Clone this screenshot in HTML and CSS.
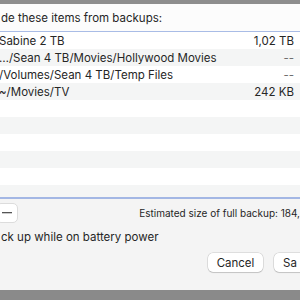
FILE: index.html
```html
<!DOCTYPE html>
<html lang="en">
<head>
    <meta charset="UTF-8">
    <meta name="viewport" content="width=device-width, initial-scale=1.0">
    <title>Time Machine Options</title>
    <link rel="stylesheet" href="styles.css">
</head>
<body>
    <main class="sheet">
        <div class="edge"></div>
        <div class="list-head">de these items from backups:</div>
        <section class="list">
            <div class="row">
                <span class="name">Sabine 2 TB</span>
                <span class="size">1,02 TB</span>
            </div>
            <div class="row">
                <span class="name">…/Sean 4 TB/Movies/Hollywood Movies</span>
                <span class="size muted">--</span>
            </div>
            <div class="row">
                <span class="name">/Volumes/Sean 4 TB/Temp Files</span>
                <span class="size muted">--</span>
            </div>
            <div class="row">
                <span class="name">~/Movies/TV</span>
                <span class="size">242 KB</span>
            </div>
            <div class="row"></div>
            <div class="row"></div>
            <div class="row"></div>
            <div class="row"></div>
            <div class="row"></div>
            <div class="row"></div>
        </section>
        <div class="list-tools">
            <button class="seg-btn">
                <svg width="10" height="2" viewBox="0 0 10 2"><rect width="10" height="1.3" fill="#555"/></svg>
            </button>
            <span class="estimate">Estimated size of full backup: 184,</span>
        </div>
        <div class="check-row">ck up while on battery power</div>
        <div class="actions">
            <button class="btn">Cancel</button>
            <button class="btn btn--cut">Sa</button>
        </div>
        <div class="edge edge--bottom"></div>
    </main>
</body>
</html>
```

FILE: styles.css
```css
* {
    box-sizing: border-box;
    font-family: Inter, "Liberation Sans", sans-serif;
}
body {
    margin: 0;
    width: 300px;
    height: 300px;
    overflow: hidden;
    background: #f4f4f4;
    color: #262626;
}
.sheet {
    display: flex;
    flex-direction: column;
    width: 300px;
    height: 300px;
}
.edge {
    height: 4px;
    background: #8e8e8e;
    flex-shrink: 0;
}
.edge--bottom {
    height: 10px;
    margin-top: auto;
    background: #8a8a8a;
}
.list-head {
    height: 27px;
    padding-left: 1px;
    display: flex;
    align-items: center;
    font-size: 11.5px;
    background: #fcfcfc;
    white-space: nowrap;
}
.list {
    height: 168px;
    overflow: hidden;
    border-top: 1px solid #a9bce6;
    border-bottom: 2px solid #a3b7e4;
    background: #fff;
    flex-shrink: 0;
}
.row {
    display: flex;
    justify-content: space-between;
    align-items: center;
    height: 17px;
    padding: 1px 6px 0 0;
    font-size: 11.5px;
    white-space: nowrap;
}
.row:nth-child(even) {
    background: #f4f5f5;
}
.name {
    margin-left: -1px;
}
.muted {
    color: #6e6e6e;
}
.list-tools {
    display: flex;
    align-items: center;
    height: 20px;
    margin-top: 4px;
}
.seg-btn {
    display: flex;
    align-items: center;
    justify-content: center;
    width: 30px;
    height: 20px;
    margin-left: -4px;
    padding: 0;
    background: #fff;
    border: 1px solid #dcdcdc;
    border-radius: 5px;
}
.estimate {
    margin-left: 121px;
    font-size: 10px;
    white-space: nowrap;
}
.check-row {
    margin-top: 7px;
    height: 14px;
    padding-left: 1px;
    font-size: 11.5px;
    white-space: nowrap;
}
.actions {
    display: flex;
    gap: 11px;
    margin-top: 9px;
    padding-left: 208px;
}
.btn {
    flex-shrink: 0;
    width: 55px;
    height: 19px;
    padding: 0;
    font-size: 11.5px;
    color: #262626;
    background: #fff;
    border: none;
    border-radius: 5px;
    box-shadow: 0 0 0 0.5px rgba(0, 0, 0, 0.18), 0 1px 1px rgba(0, 0, 0, 0.12);
}
.btn--cut {
    width: 32px;
    padding-left: 9px;
    text-align: left;
}
```
